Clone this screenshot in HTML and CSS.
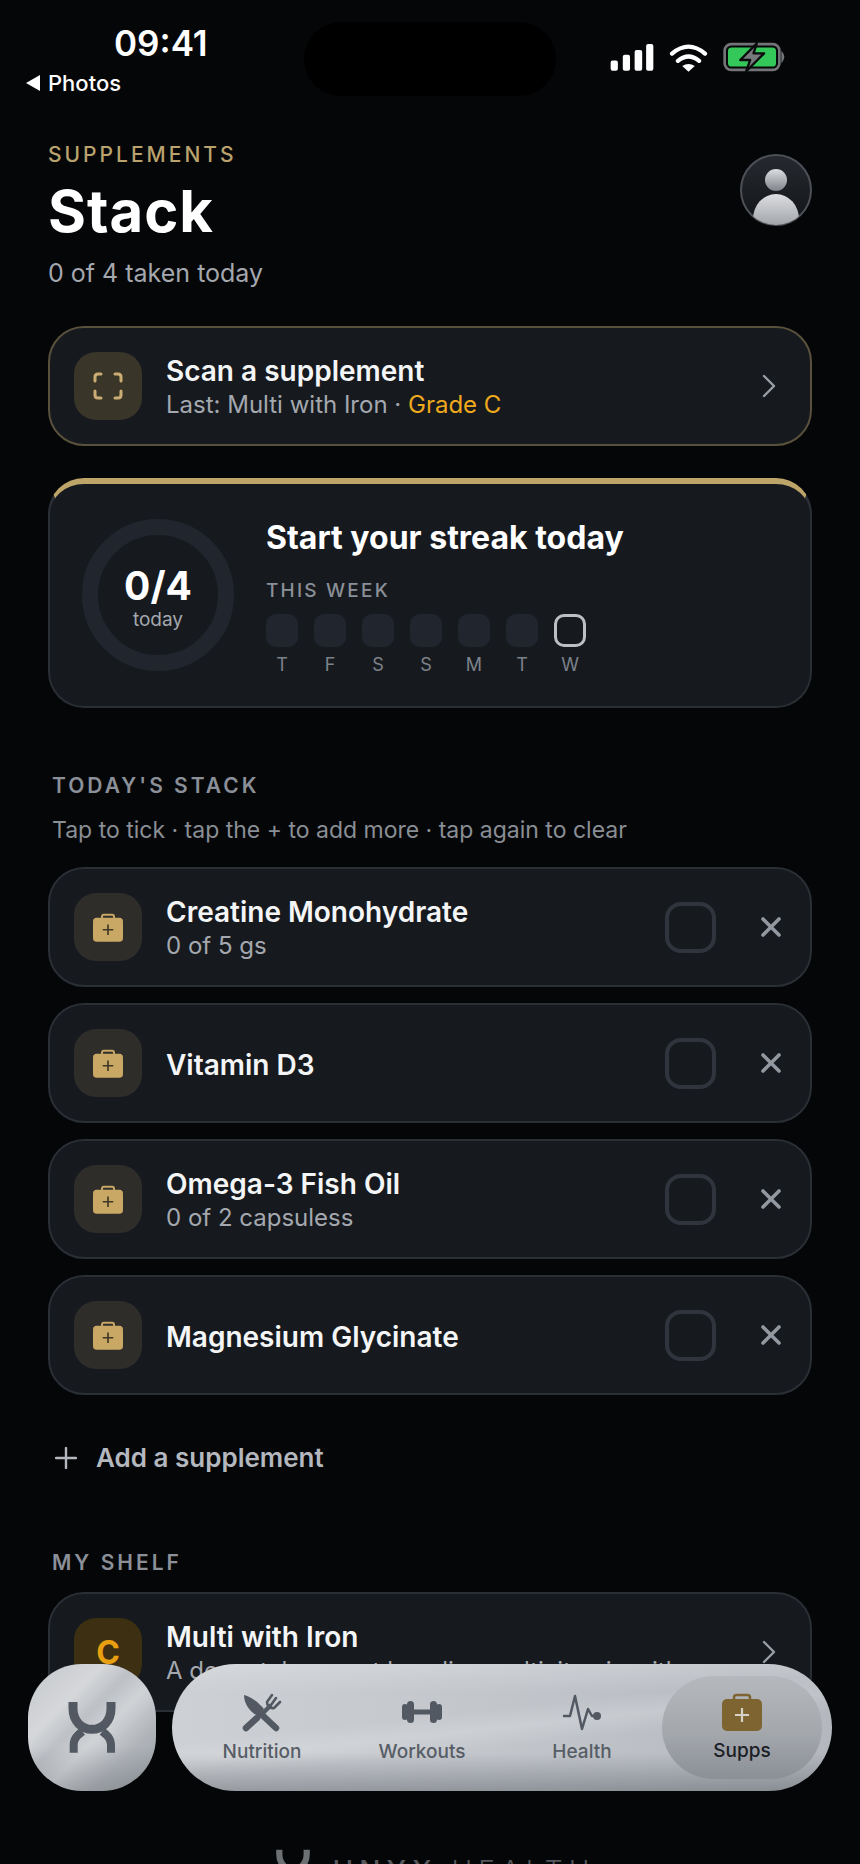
FILE: index.html
```html
<!DOCTYPE html>
<html lang="en">
<head>
    <meta charset="UTF-8">
    <meta name="viewport" content="width=device-width, initial-scale=1.0">
    <title>Stack</title>
    <link rel="stylesheet" href="styles.css">
</head>

<body>
    <svg class="defs" width="0" height="0">
        <symbol id="bag" viewBox="0 0 40 38">
            <path d="M12 8V4.500Q12 2 14.500 2H25.500Q28 2 28 4.500V8" fill="none" stroke="currentColor" stroke-width="2.600"/>
            <rect x="0" y="6" width="40" height="32" rx="5" fill="currentColor"/>
            <path d="M20 15V29M13 22H27" fill="none" stroke="var(--plus)" stroke-width="2.200"/>
        </symbol>
        <symbol id="chevron" viewBox="0 0 14 24">
            <path d="M2 2L12 12L2 22" fill="none" stroke="#9a9ea5" stroke-width="2.400" stroke-linecap="round" stroke-linejoin="round"/>
        </symbol>
        <symbol id="close" viewBox="0 0 20 20">
            <path d="M2 2L18 18M18 2L2 18" fill="none" stroke="#9298a0" stroke-width="3.600" stroke-linecap="round"/>
        </symbol>
    </svg>

    <!-- Status bar -->
    <div class="status-bar">
        <div class="status-left">
            <div class="clock">09:41</div>
            <div class="back-link"><span class="back-arrow"></span>Photos</div>
        </div>
        <div class="island"></div>
        <div class="status-right">
            <svg width="44" height="27" viewBox="60 42 134 82">
                <rect x="62" y="92" width="22" height="31" rx="6" fill="#fff"/>
                <rect x="99" y="75" width="22" height="48" rx="6" fill="#fff"/>
                <rect x="135" y="60" width="23" height="63" rx="6" fill="#fff"/>
                <rect x="170" y="42" width="22" height="81" rx="6" fill="#fff"/>
            </svg>
            <svg width="39" height="29" viewBox="236 38 118 88">
                <path d="M245 70Q295 28 345 70M263 92Q295 66 327 92" fill="none" stroke="#fff" stroke-width="13" stroke-linecap="round"/>
                <path d="M276 108Q295 96 314 108L295 125Z" fill="#fff"/>
            </svg>
            <svg width="63" height="30" viewBox="398 38 190 90">
                <rect x="403" y="44" width="165" height="78" rx="20" fill="none" stroke="#727477" stroke-width="8"/>
                <rect x="413" y="54" width="145" height="58" rx="11" fill="#34c759"/>
                <path d="M576 70Q586 82 576 96Z" fill="#727477" stroke="#727477" stroke-width="4"/>
                <path d="M500 42L450 92H480L468 126L522 72H490Z" fill="#77797c" stroke="#0a0b0d" stroke-width="7" stroke-linejoin="round"/>
            </svg>
        </div>
    </div>

    <main class="page">
        <header class="page-head">
            <div>
                <div class="eyebrow">SUPPLEMENTS</div>
                <h1>Stack</h1>
                <p class="head-sub">0 of 4 taken today</p>
            </div>
            <svg class="avatar" width="72" height="72" viewBox="0 0 72 72">
                <defs>
                    <linearGradient id="skin" x1="0" y1="0" x2="0" y2="1">
                        <stop offset="0" stop-color="#dcdee1"/>
                        <stop offset="1" stop-color="#7f8288"/>
                    </linearGradient>
                    <linearGradient id="disc" x1="0" y1="0" x2="0" y2="1">
                        <stop offset="0" stop-color="#26292f"/>
                        <stop offset="1" stop-color="#121418"/>
                    </linearGradient>
                    <clipPath id="round"><circle cx="36" cy="36" r="35"/></clipPath>
                </defs>
                <circle cx="36" cy="36" r="35" fill="url(#disc)" stroke="#4d5056" stroke-width="2"/>
                <g clip-path="url(#round)">
                    <circle cx="36" cy="26" r="11" fill="url(#skin)"/>
                    <ellipse cx="36" cy="65" rx="23" ry="25" fill="url(#skin)"/>
                </g>
            </svg>
        </header>

        <div class="card scan-card">
            <div class="card-icon scan-icon">
                <svg width="30" height="28" viewBox="0 0 30 28">
                    <path d="M2 9V5Q2 2 5 2H8M22 2H25Q28 2 28 5V9M28 19V23Q28 26 25 26H22M8 26H5Q2 26 2 23V19" fill="none" stroke="#c9ad73" stroke-width="3" stroke-linecap="round"/>
                </svg>
            </div>
            <div class="card-text">
                <div class="card-title">Scan a supplement</div>
                <div class="card-sub">Last: Multi with Iron · <span class="grade">Grade C</span></div>
            </div>
            <svg class="chevron" width="14" height="24"><use href="#chevron"/></svg>
        </div>

        <div class="streak-card">
            <div class="ring">
                <div class="ring-count">0/4</div>
                <div class="ring-label">today</div>
            </div>
            <div class="streak-info">
                <div class="streak-title">Start your streak today</div>
                <div class="week-label">THIS WEEK</div>
                <div class="week">
                    <div class="day"><span class="day-box"></span>T</div>
                    <div class="day"><span class="day-box"></span>F</div>
                    <div class="day"><span class="day-box"></span>S</div>
                    <div class="day"><span class="day-box"></span>S</div>
                    <div class="day"><span class="day-box"></span>M</div>
                    <div class="day"><span class="day-box"></span>T</div>
                    <div class="day"><span class="day-box today"></span>W</div>
                </div>
            </div>
        </div>

        <div class="section-label stack-label">TODAY'S STACK</div>
        <div class="hint">Tap to tick · tap the + to add more · tap again to clear</div>

        <div class="stack-list">
            <div class="card row">
                <div class="card-icon bag-icon"><svg class="bag" width="30" height="29"><use href="#bag"/></svg></div>
                <div class="card-text">
                    <div class="card-title">Creatine Monohydrate</div>
                    <div class="card-sub">0 of 5 gs</div>
                </div>
                <div class="tick"></div>
                <svg class="remove" width="20" height="20"><use href="#close"/></svg>
            </div>
            <div class="card row">
                <div class="card-icon bag-icon"><svg class="bag" width="30" height="29"><use href="#bag"/></svg></div>
                <div class="card-text">
                    <div class="card-title">Vitamin D3</div>
                </div>
                <div class="tick"></div>
                <svg class="remove" width="20" height="20"><use href="#close"/></svg>
            </div>
            <div class="card row">
                <div class="card-icon bag-icon"><svg class="bag" width="30" height="29"><use href="#bag"/></svg></div>
                <div class="card-text">
                    <div class="card-title">Omega-3 Fish Oil</div>
                    <div class="card-sub">0 of 2 capsuless</div>
                </div>
                <div class="tick"></div>
                <svg class="remove" width="20" height="20"><use href="#close"/></svg>
            </div>
            <div class="card row">
                <div class="card-icon bag-icon"><svg class="bag" width="30" height="29"><use href="#bag"/></svg></div>
                <div class="card-text">
                    <div class="card-title">Magnesium Glycinate</div>
                </div>
                <div class="tick"></div>
                <svg class="remove" width="20" height="20"><use href="#close"/></svg>
            </div>
        </div>

        <div class="add-row">
            <svg width="22" height="22" viewBox="0 0 22 22">
                <path d="M11 1V21M1 11H21" fill="none" stroke="#b4b8be" stroke-width="2.400" stroke-linecap="round"/>
            </svg>
            Add a supplement
        </div>

        <div class="section-label shelf-label">MY SHELF</div>

        <div class="card row shelf-card">
            <div class="card-icon grade-icon">C</div>
            <div class="card-text">
                <div class="card-title">Multi with Iron</div>
                <div class="card-sub">A decent, low-cost baseline multivitamin with…</div>
            </div>
            <svg class="chevron" width="14" height="24"><use href="#chevron"/></svg>
        </div>

        <div class="brand">
            <svg class="brand-mark" width="36" height="40" viewBox="200 420 150 165">
                <path d="M218 426V445C218 485 245 508 275 508C305 508 332 485 332 445V426" fill="none" stroke="#6d7073" stroke-width="26"/>
            </svg>
            <span class="brand-name"><b>UNYX</b> HEALTH</span>
        </div>
    </main>

    <!-- Bottom nav floats over the page -->
    <nav class="dock">
        <div class="dock-logo">
            <svg width="50" height="55" viewBox="200 420 150 165">
                <path d="M218 426V445C218 485 245 508 275 508C305 508 332 485 332 445V426" fill="none" stroke="#535962" stroke-width="27"/>
                <path d="M208 578V555C208 530 224 516 238 505L254 524C240 534 232 542 232 556V578ZM344 578V555C344 530 328 516 314 505L298 524C312 534 320 542 320 556V578Z" fill="#535962"/>
            </svg>
        </div>
        <div class="dock-bar">
            <div class="dock-item">
                <svg width="40" height="40" viewBox="0 0 40 40">
                    <path d="M2 3C10 5 17 11 22 17L16 24C8 20 2 12 2 3Z" fill="#535962"/>
                    <path d="M17 20L34 36M15 26L4 36" fill="none" stroke="#535962" stroke-width="6.500" stroke-linecap="round"/>
                    <path d="M20 22L29 13" fill="none" stroke="#535962" stroke-width="4.500"/>
                    <path d="M25 10L30 3M29 13L34 6M32 16L38 10M25 10C25 14 28 17 32 16" fill="none" stroke="#535962" stroke-width="2.600" stroke-linecap="round"/>
                </svg>
                <span>Nutrition</span>
            </div>
            <div class="dock-item">
                <svg width="40" height="40" viewBox="0 0 40 40">
                    <rect x="0" y="12" width="6" height="16" rx="3" fill="#535962"/>
                    <rect x="5" y="9" width="7" height="22" rx="3.500" fill="#535962"/>
                    <rect x="11" y="17.500" width="18" height="5" fill="#535962"/>
                    <rect x="28" y="9" width="7" height="22" rx="3.500" fill="#535962"/>
                    <rect x="34" y="12" width="6" height="16" rx="3" fill="#535962"/>
                </svg>
                <span>Workouts</span>
            </div>
            <div class="dock-item">
                <svg width="40" height="40" viewBox="0 0 40 40">
                    <path d="M2 24H8L13 4L20 37L26 17L30 24H36" fill="none" stroke="#535962" stroke-width="2.500" stroke-linejoin="round" stroke-linecap="round"/>
                    <circle cx="35" cy="24" r="4" fill="#535962"/>
                </svg>
                <span>Health</span>
            </div>
            <div class="dock-item active">
                <svg class="bag-nav" width="40" height="38"><use href="#bag"/></svg>
                <span>Supps</span>
            </div>
        </div>
    </nav>
</body>
</html>
```

FILE: styles.css
```css
* {
    box-sizing: border-box;
}

html,
body {
    margin: 0;
    padding: 0;
}

body {
    position: relative;
    width: 860px;
    height: 1864px;
    overflow: hidden;
    background-color: #050608;
    color: #fff;
    font-family: 'Inter', 'Liberation Sans', sans-serif;
}

.defs {
    position: absolute;
}

/* Status bar */
.status-bar {
    display: flex;
    height: 143px;
    padding-top: 22px;
}

.status-left {
    width: 304px;
    padding-left: 26px;
}

.clock {
    margin-top: 4px;
    padding-left: 88px;
    font-size: 35px;
    font-weight: 600;
    line-height: 34px;
}

.back-link {
    display: flex;
    align-items: center;
    gap: 8px;
    margin-top: 10px;
    font-size: 22px;
    font-weight: 500;
    line-height: 26px;
}

.back-arrow {
    width: 0;
    height: 0;
    border-top: 8px solid transparent;
    border-bottom: 8px solid transparent;
    border-right: 14px solid #fff;
}

.island {
    width: 252px;
    height: 74px;
    border-radius: 37px;
    background-color: #000;
}

.status-right {
    display: flex;
    align-items: center;
    gap: 15px;
    height: 30px;
    margin-top: 20px;
    margin-left: 54px;
}

/* Page */
.page {
    padding: 0 48px;
}

.page-head {
    display: flex;
    justify-content: space-between;
    align-items: flex-start;
}

.eyebrow {
    color: #b9a26c;
    font-size: 21px;
    font-weight: 500;
    line-height: 24px;
    letter-spacing: 3px;
}

h1 {
    margin: 12px 0 0;
    font-size: 58px;
    font-weight: 700;
    line-height: 64px;
    letter-spacing: 1px;
}

.head-sub {
    margin: 15px 0 0;
    color: #a4a8ae;
    font-size: 25px;
    line-height: 30px;
}

.avatar {
    margin-top: 11px;
}

.card {
    display: flex;
    align-items: center;
    gap: 24px;
    padding: 0 24px;
    border: 2px solid #2a2e35;
    border-radius: 36px;
    background-color: #161a1f;
}

.scan-card {
    height: 120px;
    margin-top: 38px;
    border-color: #59513c;
}

.card-icon {
    display: flex;
    align-items: center;
    justify-content: center;
    flex-shrink: 0;
    width: 68px;
    height: 68px;
    border-radius: 22px;
}

.scan-icon {
    background-color: #3a3529;
}

.bag-icon {
    background-color: #2f2d29;
}

.grade-icon {
    background-color: #3d2f12;
    color: #e8a010;
    font-size: 32px;
    font-weight: 700;
}

.card-text {
    flex: 1;
    min-width: 0;
    margin-top: 4px;
}

.card-title {
    color: #f4f5f6;
    font-size: 28px;
    font-weight: 600;
    line-height: 34px;
}

.card-sub {
    overflow: hidden;
    color: #a4a8ae;
    font-size: 24px;
    line-height: 34px;
    white-space: nowrap;
}

.grade {
    color: #efa91c;
}

.chevron {
    margin-right: 10px;
}

/* Streak card */
.streak-card {
    display: flex;
    align-items: center;
    gap: 32px;
    height: 230px;
    margin-top: 32px;
    padding-left: 32px;
    border: 2px solid #2a2e35;
    border-top: 6px solid #bda468;
    border-radius: 36px;
    background-color: #161a1f;
}

.ring {
    display: flex;
    flex-direction: column;
    align-items: center;
    justify-content: center;
    width: 152px;
    height: 152px;
    padding-top: 5px;
    border: 16px solid #21252d;
    border-radius: 50%;
}

.ring-count {
    font-size: 39px;
    font-weight: 700;
    line-height: 44px;
}

.ring-label {
    color: #a4a8ae;
    font-size: 19px;
    line-height: 24px;
}

.streak-info {
    margin-top: 4px;
}

.streak-title {
    font-size: 32px;
    font-weight: 700;
    line-height: 40px;
}

.week-label {
    margin-top: 21px;
    color: #8a8f98;
    font-size: 19px;
    font-weight: 500;
    line-height: 24px;
    letter-spacing: 2.200px;
}

.week {
    display: flex;
    gap: 16px;
    margin-top: 11px;
}

.day {
    display: flex;
    flex-direction: column;
    align-items: center;
    gap: 6px;
    width: 32px;
    color: #7d828a;
    font-size: 18px;
    line-height: 24px;
}

.day-box {
    width: 32px;
    height: 33px;
    border-radius: 10px;
    background-color: #21252d;
}

.day-box.today {
    border: 3px solid #bcc0c5;
    background-color: transparent;
}

/* Sections */
.section-label {
    padding-left: 4px;
    color: #8a8f98;
    font-size: 21px;
    font-weight: 600;
    line-height: 24px;
    letter-spacing: 3px;
}

.stack-label {
    margin-top: 66px;
}

.hint {
    margin-top: 17px;
    padding-left: 4px;
    color: #8a8e95;
    font-size: 23px;
    line-height: 30px;
}

.stack-list {
    display: flex;
    flex-direction: column;
    gap: 16px;
    margin-top: 22px;
}

.row {
    height: 120px;
}

.tick {
    flex-shrink: 0;
    width: 51px;
    height: 51px;
    border: 4px solid #30353d;
    border-radius: 16px;
}

.remove {
    flex-shrink: 0;
    margin: 0 5px 0 21px;
}

.bag {
    --plus: #3f3826;
    color: #c9a866;
}

.add-row {
    display: flex;
    align-items: center;
    gap: 19px;
    margin-top: 43px;
    padding-left: 7px;
    color: #b4b8be;
    font-size: 26px;
    font-weight: 600;
    line-height: 40px;
}

.shelf-label {
    margin-top: 73px;
}

.shelf-card {
    margin-top: 17px;
}

.brand {
    display: flex;
    justify-content: center;
    gap: 22px;
    margin-top: 139px;
    padding-left: 10px;
    color: #55585c;
}

.brand-mark {
    margin-top: -3px;
}

.brand-name {
    font-size: 28px;
    font-weight: 300;
    line-height: 40px;
    letter-spacing: 6px;
}

.brand-name b {
    font-weight: 500;
}

/* Bottom dock */
.dock {
    position: absolute;
    left: 28px;
    top: 1664px;
    display: flex;
    gap: 16px;
}

.dock-logo {
    display: flex;
    align-items: center;
    justify-content: center;
    width: 128px;
    height: 127px;
    border-radius: 54px;
    background:
        linear-gradient(180deg, transparent 65%, rgba(70, 75, 82, 0.25) 100%),
        linear-gradient(135deg, #c4c7cb 0%, #d5d7da 30%, #bdc1c6 43%, #d0d3d6 56%, #b1b5ba 74%, #989da3 100%);
}

.dock-bar {
    display: flex;
    align-items: center;
    width: 660px;
    height: 127px;
    padding: 0 10px;
    border-radius: 64px;
    background:
        linear-gradient(180deg, rgba(255, 255, 255, 0.2) 0%, transparent 22%, transparent 70%, rgba(65, 70, 78, 0.38) 100%),
        linear-gradient(174deg, transparent 40%, rgba(255, 255, 255, 0.16) 50%, transparent 60%),
        linear-gradient(90deg, #cdd0d4 0%, #c2c6cb 50%, #b4b8be 100%);
}

.dock-item {
    display: flex;
    flex-direction: column;
    align-items: center;
    justify-content: center;
    gap: 8px;
    width: 160px;
    height: 103px;
    border-radius: 52px;
    color: #575d66;
    font-size: 19px;
    font-weight: 500;
    line-height: 24px;
}

.dock-item.active {
    background: linear-gradient(180deg, #b5b8bc 0%, #a4a8ad 55%, #8b9096 100%);
    color: #1c2026;
}

.bag-nav {
    --plus: #d5d2c8;
    color: #7d6430;
}
```
